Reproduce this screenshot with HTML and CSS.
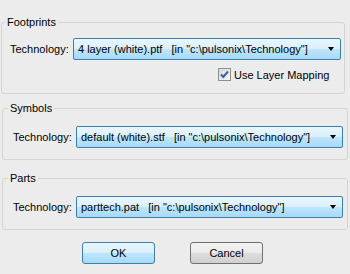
FILE: index.html
```html
<!DOCTYPE html>
<html lang="en">

<head>
    <meta charset="UTF-8">
    <title>Technology</title>
    <link rel="stylesheet" href="styles.css">
</head>

<body>
    <div class="dialog">
        <fieldset class="group group-first">
            <legend>Footprints</legend>
            <div class="row">
                <span class="label">Technology:</span>
                <div class="combo combo-first">
                    <span class="combo-text">4 layer (white).ptf&nbsp;&nbsp; [in "c:\pulsonix\Technology"]</span>
                    <span class="arrow"></span>
                </div>
            </div>
            <div class="check-row">
                <span class="check">
                    <svg width="13" height="13" viewBox="0 0 13 13">
                        <path d="M3 6.5 L5.3 9 L10 3.5" fill="none" stroke="#3d5fa8" stroke-width="2"/>
                    </svg>
                </span>
                <span>Use Layer Mapping</span>
            </div>
        </fieldset>

        <fieldset class="group">
            <legend>Symbols</legend>
            <div class="row">
                <span class="label">Technology:</span>
                <div class="combo">
                    <span class="combo-text">default (white).stf&nbsp;&nbsp; [in "c:\pulsonix\Technology"]</span>
                    <span class="arrow"></span>
                </div>
            </div>
        </fieldset>

        <fieldset class="group group-last">
            <legend>Parts</legend>
            <div class="row">
                <span class="label">Technology:</span>
                <div class="combo">
                    <span class="combo-text">parttech.pat&nbsp;&nbsp; [in "c:\pulsonix\Technology"]</span>
                    <span class="arrow"></span>
                </div>
            </div>
        </fieldset>

        <div class="buttons">
            <button class="btn btn-default">OK</button>
            <button class="btn">Cancel</button>
        </div>
    </div>
</body>

</html>
```

FILE: styles.css
```css
body {
    margin: 0;
    background: #ececec;
    font-family: "Liberation Sans", Arial, sans-serif;
    font-size: 11px;
    color: #000;
}

.dialog {
    width: 350px;
    height: 274px;
    padding-top: 16px;
    box-sizing: border-box;
}

.group {
    box-sizing: border-box;
    margin: 8px 2px 0 2px;
    padding: 0 0 0 10px;
    border: 1px solid #d3d3d3;
    border-radius: 3px;
    height: 58px;
    min-width: 0;
}

.group legend {
    margin-left: -5px;
    padding: 0 2px;
    line-height: 13px;
}

.group-first {
    margin: 0 5px 0 1px;
    padding-left: 8px;
    height: 78px;
}

.group-last {
    margin-top: 12px;
}

.row {
    display: flex;
    align-items: center;
    margin-top: 11px;
}

.group-first .row {
    margin-top: 9px;
}

.label {
    width: 63px;
}

.combo {
    display: flex;
    align-items: center;
    width: 267px;
    height: 22px;
    box-sizing: border-box;
    border: 1px solid #3c7fb1;
    border-radius: 2px;
    padding: 0 6px 0 4px;
    background: linear-gradient(#eaf6fd, #d9f0fc 50%, #bee6fd 50%, #a7d9f5);
}

.combo-first {
    width: 268px;
}

.combo-text {
    flex: 1;
    white-space: nowrap;
}

.arrow {
    width: 0;
    height: 0;
    border-left: 3.5px solid transparent;
    border-right: 3.5px solid transparent;
    border-top: 4px solid #000;
}

.check-row {
    display: flex;
    align-items: center;
    gap: 3px;
    margin: 8px 0 0 208px;
}

.check {
    width: 13px;
    height: 13px;
    box-sizing: border-box;
    border: 1px solid #8e8f8f;
    background: linear-gradient(135deg, #d8d8d8, #f8f8f8);
    display: flex;
}

.check svg {
    margin: -1px;
}

.buttons {
    display: flex;
    gap: 35px;
    margin: 12px 0 0 82px;
}

.btn {
    width: 73px;
    height: 22px;
    font: inherit;
    color: #000;
    border: 1px solid #707070;
    border-radius: 3px;
    background: linear-gradient(#f2f2f2, #ebebeb 50%, #dddddd 50%, #cfcfcf);
    padding: 0;
}

.btn-default {
    border-color: #3c7fb1;
    background: linear-gradient(#eaf6fd, #d9f0fc 50%, #bee6fd 50%, #a7d9f5);
}
```
